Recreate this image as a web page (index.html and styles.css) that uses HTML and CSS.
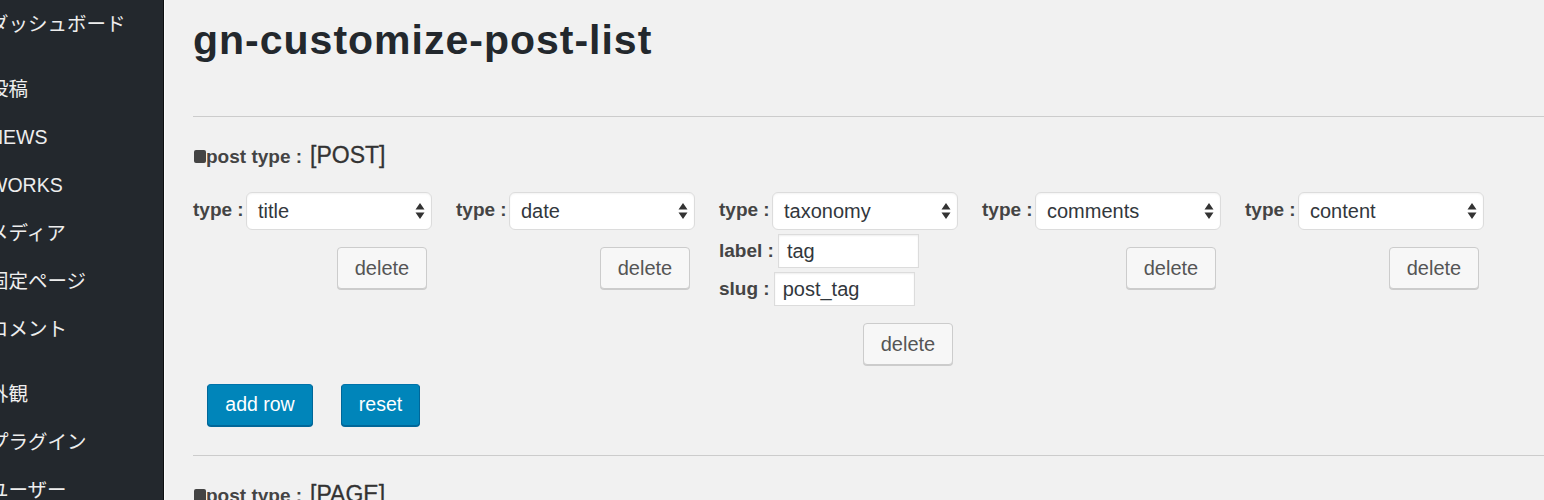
FILE: index.html
```html
<!DOCTYPE html>
<html lang="ja">
<head>
<meta charset="utf-8">
<title>gn-customize-post-list</title>
<link rel="stylesheet" href="styles.css">
</head>
<body>
<div class="layout">
  <nav class="sidebar">
    <ul class="menu">
      <li class="item">ダッシュボード</li>
      <li class="sep"></li>
      <li class="item">投稿</li>
      <li class="item latin">NEWS</li>
      <li class="item latin">WORKS</li>
      <li class="item">メディア</li>
      <li class="item">固定ページ</li>
      <li class="item">コメント</li>
      <li class="sep"></li>
      <li class="item">外観</li>
      <li class="item">プラグイン</li>
      <li class="item">ユーザー</li>
    </ul>
  </nav>
  <main class="main">
    <h1 class="title">gn-customize-post-list</h1>
    <hr class="rule rule-top">
    <section class="ptype">
      <h3 class="ptype-head"><span class="sq"></span>post type :<span class="ptype-name">[POST]</span></h3>
      <div class="cols">
        <div class="col">
          <div class="field"><span class="lbl">type :</span><div class="select"><span class="sel-text">title</span><svg class="arrows" width="10" height="18" viewBox="0 0 10 18"><path d="M5 1 L9.5 7.5 H0.5 Z M5 17 L9.5 10.5 H0.5 Z" fill="#333"/></svg></div></div>
          <div class="actions"><button class="btn">delete</button></div>
        </div>
        <div class="col">
          <div class="field"><span class="lbl">type :</span><div class="select"><span class="sel-text">date</span><svg class="arrows" width="10" height="18" viewBox="0 0 10 18"><path d="M5 1 L9.5 7.5 H0.5 Z M5 17 L9.5 10.5 H0.5 Z" fill="#333"/></svg></div></div>
          <div class="actions"><button class="btn">delete</button></div>
        </div>
        <div class="col">
          <div class="field"><span class="lbl">type :</span><div class="select"><span class="sel-text">taxonomy</span><svg class="arrows" width="10" height="18" viewBox="0 0 10 18"><path d="M5 1 L9.5 7.5 H0.5 Z M5 17 L9.5 10.5 H0.5 Z" fill="#333"/></svg></div></div>
          <div class="sub"><span class="lbl">label :</span><div class="input">tag</div></div>
          <div class="sub"><span class="lbl">slug :</span><div class="input">post_tag</div></div>
          <div class="actions"><button class="btn">delete</button></div>
        </div>
        <div class="col">
          <div class="field"><span class="lbl">type :</span><div class="select"><span class="sel-text">comments</span><svg class="arrows" width="10" height="18" viewBox="0 0 10 18"><path d="M5 1 L9.5 7.5 H0.5 Z M5 17 L9.5 10.5 H0.5 Z" fill="#333"/></svg></div></div>
          <div class="actions"><button class="btn">delete</button></div>
        </div>
        <div class="col">
          <div class="field"><span class="lbl">type :</span><div class="select"><span class="sel-text">content</span><svg class="arrows" width="10" height="18" viewBox="0 0 10 18"><path d="M5 1 L9.5 7.5 H0.5 Z M5 17 L9.5 10.5 H0.5 Z" fill="#333"/></svg></div></div>
          <div class="actions"><button class="btn">delete</button></div>
        </div>
      </div>
      <div class="bottom">
        <button class="btn btn-primary btn-add">add row</button>
        <button class="btn btn-primary btn-reset">reset</button>
      </div>
    </section>
    <hr class="rule rule-mid">
    <section class="ptype">
      <h3 class="ptype-head"><span class="sq"></span>post type :<span class="ptype-name">[PAGE]</span></h3>
    </section>
  </main>
</div>
</body>
</html>
```
FILE: styles.css
```css
* { box-sizing: border-box; }
html, body { margin: 0; padding: 0; }
body {
  background: #f1f1f1;
  font-family: "Liberation Sans", Arial, "Noto Sans CJK JP", sans-serif;
  color: #444;
  overflow: hidden;
}
.layout {
  display: flex;
  min-height: 500px;
}
.sidebar {
  width: 164px;
  flex: 0 0 164px;
  background: #23282d;
  border-right: 1px solid #0d0f11;
  box-shadow: 1px 0 0 #fbfbfb;
  overflow: hidden;
  min-height: 500px;
}
.menu {
  list-style: none;
  margin: 0;
  padding: 0;
  margin-left: -11px;
  font-family: "Liberation Sans", "Noto Sans CJK JP", sans-serif;
  font-size: 19.5px;
  color: #eeeeee;
  white-space: nowrap;
}
.item {
  height: 48px;
  display: flex;
  align-items: center;
  padding-bottom: 3px;
}
.item.latin { padding-bottom: 0; }
.sep { height: 17px; }

.main {
  flex: 1;
  padding-left: 29px;
  min-width: 0;
}
.title {
  margin: 15px 0 0;
  font-size: 41px;
  line-height: 50px;
  font-weight: 700;
  letter-spacing: 1px;
  color: #23282d;
}
.rule {
  margin: 0;
  border: 0;
  border-top: 1px solid #cccccc;
  height: 0;
}
.rule-top { margin-top: 51px; }
.rule-mid { margin-top: 29px; }

.ptype-head {
  margin: 23px 0 0;
  font-size: 19px;
  line-height: 30px;
  font-weight: 700;
  color: #444;
  display: flex;
  align-items: baseline;
}
.sq {
  display: inline-block;
  width: 12px;
  height: 13px;
  background: #444;
  border-radius: 2px;
  margin-left: 1px;
  align-self: center;
}
.ptype-name {
  font-size: 23px;
  font-weight: 400;
  color: #333;
  margin-left: 8px;
  -webkit-text-stroke: 0.3px #333;
}

.cols {
  display: flex;
  gap: 24px;
  margin-top: 20px;
}
.col {
  width: 239px;
  flex: 0 0 239px;
  display: flex;
  flex-direction: column;
}
.field, .sub {
  display: flex;
  align-items: center;
}
.lbl {
  font-size: 19px;
  font-weight: 700;
  color: #444;
  white-space: nowrap;
  margin-right: 4px;
}
.field .lbl { width: 53px; margin-right: 0; padding-bottom: 3px; }
.select {
  flex: 1;
  height: 38px;
  background: #fff;
  border: 1px solid #dcdcdc;
  border-radius: 6px;
  box-shadow: inset 0 1px 2px rgba(0,0,0,0.05);
  display: flex;
  align-items: center;
  justify-content: space-between;
  padding: 0 6px 0 11px;
}
.sel-text {
  font-size: 20px;
  color: #32373c;
}
.arrows { display: block; }
.sub { margin-top: 4px; }
.input {
  width: 141px;
  height: 34px;
  background: #fff;
  border: 1px solid #dcdcdc;
  box-shadow: inset 0 1px 2px rgba(0,0,0,0.07);
  font-size: 20px;
  color: #32373c;
  padding: 0 8px;
  display: flex;
  align-items: center;
}
.actions {
  display: flex;
  justify-content: flex-end;
  margin-top: 17px;
  padding-right: 5px;
}
.btn {
  font-family: "Liberation Sans", Arial, sans-serif;
  font-size: 20px;
  height: 42px;
  padding: 0 15px;
  border-radius: 4px;
  border: 1px solid #cccccc;
  background: #f7f7f7;
  color: #555;
  box-shadow: 0 1px 0 #cccccc;
  cursor: pointer;
  line-height: 1;
}
.actions .btn { width: 90px; padding: 0; }
.bottom {
  display: flex;
  gap: 28px;
  margin-top: 19px;
  padding-left: 14px;
}
.btn-primary {
  background: #0085ba;
  border-color: #0073aa #006799 #006799;
  box-shadow: 0 1px 0 #006799;
  color: #fff;
  font-size: 19.5px;
}
.btn-add { width: 106px; padding: 0; }
.btn-reset { width: 79px; padding: 0; }
```
